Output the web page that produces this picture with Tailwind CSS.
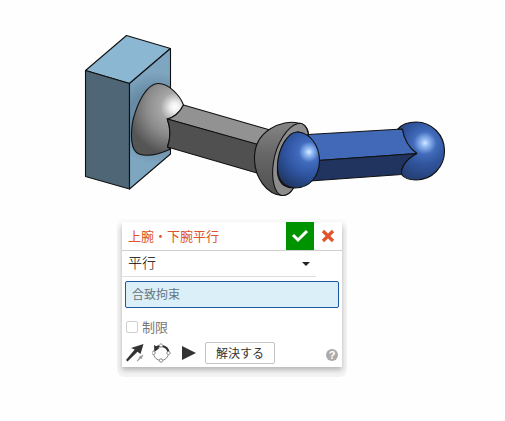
<!DOCTYPE html>
<html lang="ja">
<head>
<meta charset="utf-8">
<meta name="viewport" content="width=device-width, initial-scale=1">
<title>上腕・下腕平行</title>
<script src="https://cdn.jsdelivr.net/npm/@tailwindcss/browser@4"></script>
</head>
<body class="min-h-screen bg-[#fefefe] font-['Noto_Sans_CJK_JP',sans-serif]">
<main class="flex flex-col items-start">
  <svg class="block shrink-0" width="505" height="217" viewBox="0 0 505 217" role="img" aria-label="腕の3Dモデル" stroke="#111" stroke-width="1.1" stroke-linejoin="round">
    <defs>
      <radialGradient id="shoulder" gradientUnits="userSpaceOnUse" cx="175" cy="107" r="48">
        <stop offset="0" stop-color="#fff"/><stop offset=".1" stop-color="#eee"/><stop offset=".3" stop-color="#a6a6a6"/><stop offset=".6" stop-color="#8b8b8b"/><stop offset="1" stop-color="#555"/>
      </radialGradient>
      <radialGradient id="elbow" gradientUnits="userSpaceOnUse" cx="309" cy="152" r="40">
        <stop offset="0" stop-color="#d8ecff"/><stop offset=".1" stop-color="#8fb8f2"/><stop offset=".26" stop-color="#416bbd"/><stop offset=".6" stop-color="#2e539f"/><stop offset="1" stop-color="#203560"/>
      </radialGradient>
      <radialGradient id="wrist" gradientUnits="userSpaceOnUse" cx="425" cy="143" r="44">
        <stop offset="0" stop-color="#d3e8ff"/><stop offset=".1" stop-color="#8db4ef"/><stop offset=".26" stop-color="#416bbb"/><stop offset=".5" stop-color="#30549c"/><stop offset="1" stop-color="#203765"/>
      </radialGradient>
      <linearGradient id="cup" x1="0" y1="0" x2="0" y2="1">
        <stop offset="0" stop-color="#858585"/><stop offset=".45" stop-color="#666"/><stop offset="1" stop-color="#505050"/>
      </linearGradient>
      <radialGradient id="side" gradientUnits="userSpaceOnUse" cx="156" cy="118" r="46">
        <stop offset=".6" stop-color="#678ba4"/><stop offset="1" stop-color="#7fa6c1"/>
      </radialGradient>
    </defs>
    <path fill="#8cb7d3" d="M85.500 70.500 126.500 35.500 170.500 48.500 129.500 83.500Z"/>
    <path fill="#4e6675" d="M85.500 70.500 129.500 83.500V189L85.500 176.500Z"/>
    <path fill="url(#side)" d="M129.500 83.500 170.500 48.500V154L129.500 189Z"/>
    <path fill="url(#shoulder)" d="M158 83.500C147 84 138 101 133 120C130 136 131 151 139 154C149 157.500 162 153 170.500 149L167.500 147C171 137 171 129 167.300 119C175 117 180 112 183.500 105C180 95 168 83 158 83.500Z"/>
    <path fill="#929292" d="M183.500 105 270 130 258 145 167.300 119C175 117 180 112 183.500 105Z"/>
    <path fill="#505050" d="M167.300 119 260 145 257 173 167.500 147C171 137 171 129 167.300 119Z"/>
    <path fill="url(#cup)" d="M298 123C291 121 279 123 270 129C259 136 254 147 254.500 160C255 177 266 194 282 195.500C287 196 291 192 293.500 188L308.500 135C308 127 303 123 298 123Z"/>
    <path fill="#8d8d8d" d="M298 123.500C287 126 276 145 273.500 162C271 178 274 194 282 195.500C287 196 291 192 293.500 188C278 188 276 174 278 162C281 145 288 132 299 132L308.500 136C308 127 303 122 298 123.500Z"/>
    <path fill="#4269b8" d="M308 134.500 402.500 129C404 140 408 147 417 153.500L318 160.500Z"/>
    <path fill="#20345f" d="M318 160.500 417 153.500C407 159 401 166 401.500 174.500L310 181Z"/>
    <path fill="url(#elbow)" d="M298 132C310 133 319 145 319.500 160C319.500 176 310 188 295 188C283 187 277 180 277.500 165C278 149 288 131 298 132Z"/>
    <path fill="url(#wrist)" d="M397.500 129.300C402 124 409 122 416 122C432 122 444.500 135 444.500 151C444.500 167 432 180 416 180C410 180 404 178 401.500 174.500C401 166 407 159 417 153.500C408 147 404 140 402.500 129Z"/>
  </svg>

  <div class="ml-[117px] max-w-full rounded-lg bg-linear-to-b from-[#fefefe] to-[#f3f3f3] to-10% px-[5px] pt-[5px] pb-2.5">
  <form class="w-[220px] max-w-full bg-white text-[#333] shadow-[0_3px_5px_rgba(0,0,0,0.25)]">
    <header class="flex h-[29px] items-center border-b border-[#cfcfcf]">
      <h1 class="flex-1 pl-1.5 text-[13px] leading-7 text-[#e0532d]">上腕・下腕平行</h1>
      <button type="button" aria-label="確定" class="grid size-7 place-items-center bg-[#009300]">
        <svg width="18" height="14" viewBox="0 0 18 14" fill="none" stroke="#fff" stroke-width="3"><path d="m2 6 5 5 9-9"/></svg>
      </button>
      <button type="button" aria-label="キャンセル" class="grid size-7 place-items-center">
        <svg width="14" height="14" viewBox="0 0 14 14" fill="none" stroke="#e0532d" stroke-width="3.200"><path d="m2 2 10 10M12 2 2 12"/></svg>
      </button>
    </header>
    <div class="relative mr-[26px] border-b border-[#dedede]">
      <select aria-label="合致タイプ" class="block h-[25px] w-full appearance-none bg-transparent pb-1 pl-1.5 text-sm leading-5 font-light text-black outline-none"><option>平行</option></select>
      <svg class="pointer-events-none absolute top-[11px] right-1.5" width="8" height="4" viewBox="0 0 8 4" fill="#222"><path d="M0 0h8L4 4Z"/></svg>
    </div>
    <div class="px-[3px] pt-1">
      <input type="text" aria-label="合致拘束" value="合致拘束" class="block h-[27px] w-full rounded-xs border border-[#1d55a5] bg-[#daeff8] px-1.5 pb-0.5 text-xs text-[#66747c] outline-none">
    </div>
    <label class="mt-2 flex h-[21px] w-fit items-center gap-1 pl-1 text-[13px] text-[#777]">
      <input type="checkbox" class="size-3 appearance-none rounded-xs border border-[#cecece] bg-white">制限
    </label>
    <footer class="flex h-[30px] items-center px-1 pt-0.5">
      <button type="button" aria-label="方向を反転" class="h-5 w-[26px]">
        <svg width="20" height="20" viewBox="0 0 20 20"><path fill="#333" d="M17.500 1 14.500 11 11.500 8.800 1.500 18.500 0 17 8.700 6.500 5 5Z"/><path fill="#999" d="m17.500 11.500-2 4.500-1-.6-3 3.100-.7-.7 2.700-3.200-1-.6Z"/></svg>
      </button>
      <button type="button" aria-label="軸を再配置" class="h-5 w-[30px]">
        <svg width="20" height="20" viewBox="0 0 20 20" fill="none"><circle cx="9" cy="10" r="7.500" stroke="#888"/><path d="M3.500 5.500A7.500 7.500 0 0 1 16.500 9" stroke="#333" stroke-width="2.200"/><path d="m2 2 .5 7 5-4Z" fill="#333"/><g fill="#fff" stroke="#888"><path d="m9 .5 2 2-2 2-2-2ZM1.500 8l2 2-2 2-2-2ZM16.500 8l2 2-2 2-2-2Z"/><circle cx="9" cy="17.500" r="1.700"/></g></svg>
      </button>
      <button type="button" aria-label="再生" class="h-5 w-[23px]">
        <svg width="14" height="20" viewBox="0 0 14 20"><path fill="#333" d="M0 3v14l14-7Z"/></svg>
      </button>
      <button type="button" class="h-[22px] w-[70px] rounded-xs border border-[#c4c4c4] bg-white text-xs text-[#333]">解決する</button>
      <button type="button" aria-label="ヘルプ" class="mt-1 ml-auto grid size-3 place-items-center rounded-full bg-[#aaa] font-['Liberation_Sans',sans-serif] text-[11px] leading-3 font-bold text-white">?</button>
    </footer>
  </form>
  </div>
</main>
</body>
</html>
